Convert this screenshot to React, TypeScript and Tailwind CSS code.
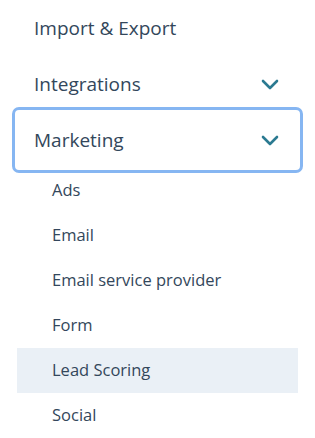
import { useState } from "react"

const subItems = ["Ads", "Email", "Email service provider", "Form", "Lead Scoring", "Social"]

function Chevron() {
  return (
    <svg width="18" height="11" viewBox="0 0 18 11" fill="none" className="shrink-0">
      <path d="M2 2l7 7 7-7" stroke="#2b7a91" strokeWidth="2.6" strokeLinecap="round" strokeLinejoin="round" />
    </svg>
  )
}

export default function App() {
  const [active] = useState("Lead Scoring")

  return (
    <div className="w-[315px] h-[438px] bg-white overflow-hidden font-['Open_Sans',sans-serif] text-[#33475b]">
      <div className="pl-[17px] pr-[17px]">
        {/* Top level */}
        <div className="h-[56px] flex items-center pl-[17px] text-[19px]">Import &amp; Export</div>
        <div className="h-[56px] flex items-center justify-between pl-[17px] pr-[19px] text-[19px]">
          <span>Integrations</span>
          <Chevron />
        </div>
        <div className="h-[56px] flex items-center justify-between pl-[17px] pr-[19px] text-[19px] rounded-[2px] outline-3 outline-offset-2 outline-[#86b6f2]">
          <span>Marketing</span>
          <Chevron />
        </div>

        {/* Sub items */}
        <div>
          {subItems.map((item) => (
            <div
              key={item}
              className={`h-[45px] flex items-center pl-[35px] text-[16.5px] ${item === active ? "bg-[#eaf0f6]" : ""}`}
            >
              {item}
            </div>
          ))}
        </div>
      </div>
    </div>
  )
}
